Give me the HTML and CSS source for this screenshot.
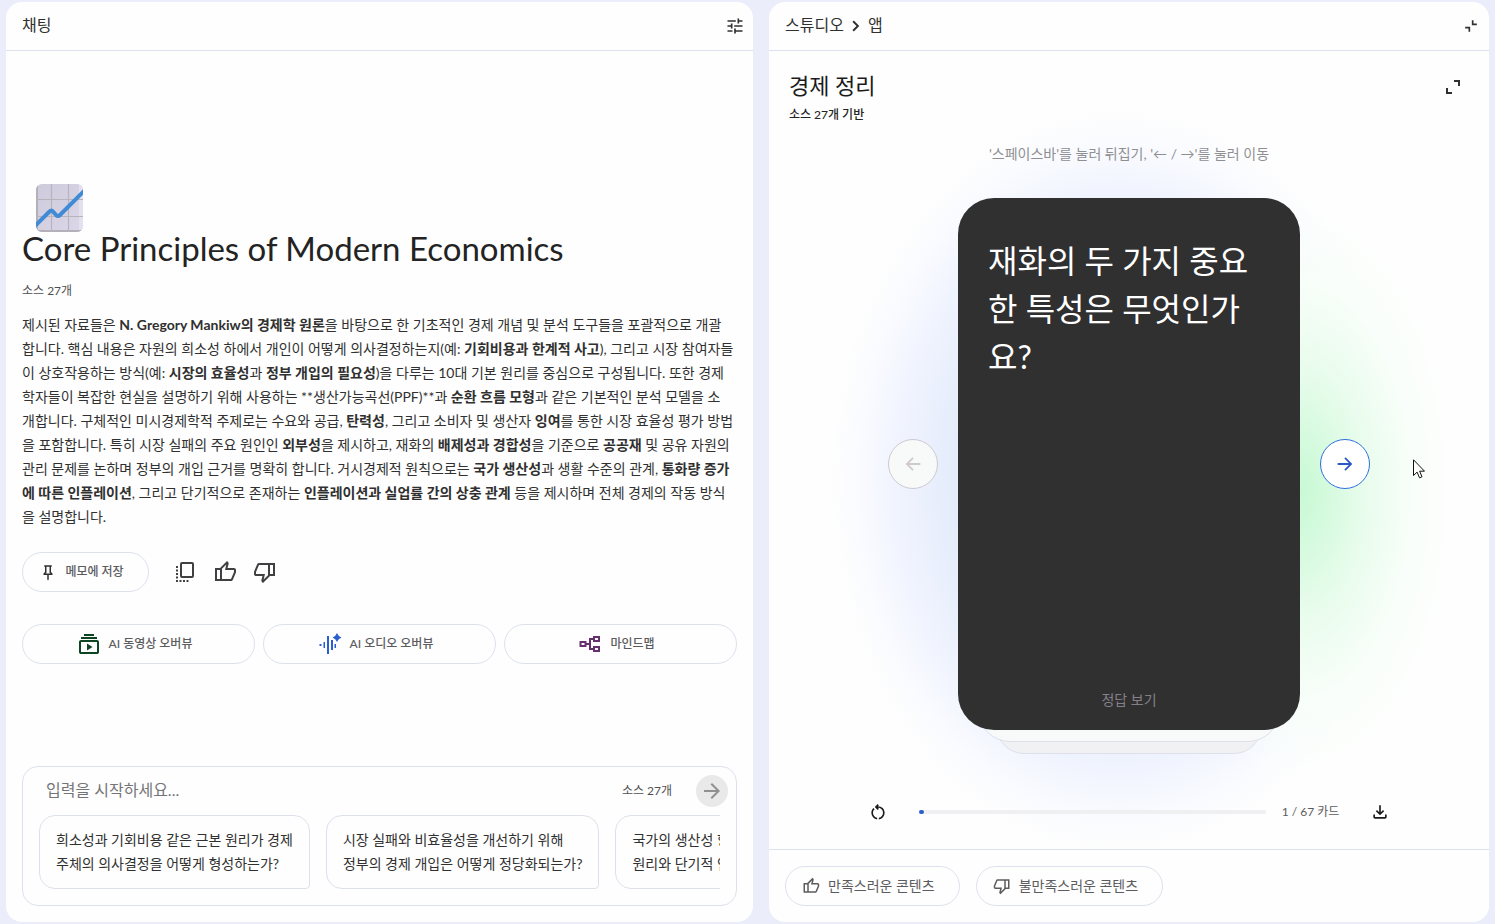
FILE: index.html
```
<!DOCTYPE html>
<html lang="ko">
<head>
  <meta charset="UTF-8">
  <meta name="viewport" content="width=device-width, initial-scale=1">
  <title>Core Principles of Modern Economics</title>
  <link rel="stylesheet" href="styles.css">
</head>
<body>

<div class="workspace">

  <!-- Chat -->
  <section class="panel chat">
    <header class="panel-header">
      <h2>채팅</h2>
      <button class="icon-btn" type="button" aria-label="채팅 설정">
        <svg class="icon s20" viewBox="0 -960 960 960"><path d="M440-120v-240h80v80h320v80H520v80h-80Zm-320-80v-80h240v80H120Zm160-160v-80H120v-80h160v-80h80v240h-80Zm160-80v-80h400v80H440Zm160-160v-240h80v80h160v80H680v80h-80Zm-480-80v-80h400v80H120Z"/></svg>
      </button>
    </header>

    <div class="chat-body">
      <svg class="emoji" viewBox="0 0 48 48" aria-hidden="true">
        <defs>
          <linearGradient id="tile" x1="0" y1="0" x2="1" y2="1">
            <stop offset="0" stop-color="#cccbdc"/>
            <stop offset="1" stop-color="#dcd6e8"/>
          </linearGradient>
          <clipPath id="tileClip"><rect width="47" height="48" rx="6"/></clipPath>
        </defs>
        <g clip-path="url(#tileClip)">
          <rect width="47" height="48" fill="url(#tile)"/>
          <path d="M45 0v48" stroke="#e4e0ef" stroke-width="4"/>
          <path d="M0 47h47M1 0v48" stroke="#b5afba" stroke-width="2"/>
          <path d="M15.500 0v48M32.500 0v48M0 15.500h47M0 32.500h47" stroke="#b9b4bb" stroke-width="1.200"/>
          <path d="M-2 43L13.500 27.500Q15.500 25.500 17 27.500L20 31Q22 33 24 31L50 5" fill="none" stroke="#3f8bd6" stroke-width="4"/>
        </g>
      </svg>
      <h1>Core Principles of Modern Economics</h1>
      <p class="source-count">소스 27개</p>

      <p class="summary">
        제시된 자료들은 <b>N. Gregory Mankiw의 경제학 원론</b>을 바탕으로 한 기초적인 경제 개념 및 분석 도구들을 포괄적으로 개괄<br>합니다. 핵심 내용은 자원의 희소성 하에서 개인이 어떻게 의사결정하는지(예: <b>기회비용과 한계적 사고</b>), 그리고 시장 참여자들<br>이 상호작용하는 방식(예: <b>시장의 효율성</b>과 <b>정부 개입의 필요성</b>)을 다루는 10대 기본 원리를 중심으로 구성됩니다. 또한 경제<br>학자들이 복잡한 현실을 설명하기 위해 사용하는 **생산가능곡선(PPF)**과 <b>순환 흐름 모형</b>과 같은 기본적인 분석 모델을 소<br>개합니다. 구체적인 미시경제학적 주제로는 수요와 공급, <b>탄력성</b>, 그리고 소비자 및 생산자 <b>잉여</b>를 통한 시장 효율성 평가 방법<br>을 포함합니다. 특히 시장 실패의 주요 원인인 <b>외부성</b>을 제시하고, 재화의 <b>배제성과 경합성</b>을 기준으로 <b>공공재</b> 및 공유 자원의<br>관리 문제를 논하며 정부의 개입 근거를 명확히 합니다. 거시경제적 원칙으로는 <b>국가 생산성</b>과 생활 수준의 관계, <b>통화량 증가<br>에 따른 인플레이션</b>, 그리고 단기적으로 존재하는 <b>인플레이션과 실업률 간의 상충 관계</b> 등을 제시하며 전체 경제의 작동 방식<br>을 설명합니다.
      </p>

      <div class="actions">
        <button class="pill save" type="button">
          <svg class="icon s18" viewBox="0 -960 960 960"><path d="m640-480 80 80v80H520v240l-40 40-40-40v-240H240v-80l80-80v-280h-40v-80h400v80h-40v280Zm-286 80h252l-46-46v-314H400v314l-46 46Z"/></svg>
          메모에 저장
        </button>
        <div class="reactions">
          <button class="icon-btn" type="button" aria-label="복사">
            <svg class="icon s24" viewBox="0 0 24 24"><path d="M9 2h10a2 2 0 0 1 2 2v12a2 2 0 0 1-2 2H9a2 2 0 0 1-2-2V4a2 2 0 0 1 2-2Zm0 2v12h10V4ZM3 6h2v2H3ZM3 9.500h2v2H3ZM3 13h2v2H3ZM3 16.500h2v2H3ZM3 20h2v2H3ZM6.500 20h2v2h-2ZM10 20h2v2h-2ZM13.500 20h2v2h-2Z" fill-rule="evenodd"/></svg>
          </button>
          <button class="icon-btn" type="button" aria-label="좋아요">
            <svg class="icon s24" viewBox="0 -960 960 960"><path d="M720-120H80v-520h200l280-280 50 50q7 7 11.500 19t4.500 23v14l-44 174h258q32 0 56 24t24 56v80q0 7-2 15t-4 15L794-168q-9 20-30 34t-44 14Zm-360-80h360l120-280v-80H480l54-220-174 174v406Zm-80 0v-360H160v360Z" fill-rule="evenodd"/></svg>
          </button>
          <button class="icon-btn" type="button" aria-label="싫어요">
            <svg class="icon s24" viewBox="0 -960 960 960"><path d="M240-840h640v520H680L400-40l-50-50q-7-7-11.500-19t-4.500-23v-14l44-174H120q-32 0-56-24t-24-56v-80q0-7 2-15t4-15l120-282q9-20 30-34t44-14Zm360 80H240L120-480v80h360l-54 220 174-174v-406Zm80 0v360h120v-360Z" fill-rule="evenodd"/></svg>
          </button>
        </div>
      </div>

      <div class="overviews">
        <button class="pill" type="button">
          <svg class="icon s24 green" viewBox="0 -960 960 960"><path d="M160-80q-33 0-56.500-23.500T80-160v-400q0-33 23.500-56.500T160-640h640q33 0 56.500 23.500T880-560v400q0 33-23.500 56.500T800-80H160Zm0-80h640v-400H160v400Zm240-60 220-140-220-140v280ZM160-680v-80h640v80H160Zm120-120v-80h400v80H280Z" fill-rule="evenodd"/></svg>
          AI 동영상 오버뷰
        </button>
        <button class="pill" type="button">
          <svg class="icon s24 blue" viewBox="0 0 24 24"><path d="M1.500 12h2v2h-2ZM5.500 10h1.500v6H5.500ZM9 4h2v18H9ZM13 8h2v10h-2ZM16.500 12H18v4h-1.500ZM19 1Q20.200 4.300 23.500 5.500Q20.200 6.700 19 10Q17.800 6.700 14.500 5.500Q17.800 4.300 19 1Z"/></svg>
          AI 오디오 오버뷰
        </button>
        <button class="pill" type="button">
          <svg class="icon s24 purple" viewBox="0 0 24 24"><path d="M2.500 10h5v4h-5ZM16 5h5v4h-5ZM16 15h5v4h-5ZM7.500 12H12M16 7h-4v10h4" fill="none" stroke="currentColor" stroke-width="2"/></svg>
          마인드맵
        </button>
      </div>
    </div>

    <form class="composer">
      <div class="composer-row">
        <input type="text" aria-label="입력" placeholder="입력을 시작하세요...">
        <span class="source-count">소스 27개</span>
        <button class="send" type="button" aria-label="보내기">
          <svg class="icon s24" viewBox="0 -960 960 960"><path d="M647-440H160v-80h487L423-744l57-56 320 320-320 320-57-56 224-224Z"/></svg>
        </button>
      </div>
      <div class="suggestions">
        <button type="button">희소성과 기회비용 같은 근본 원리가 경제<br>주체의 의사결정을 어떻게 형성하는가?</button>
        <button type="button">시장 실패와 비효율성을 개선하기 위해<br>정부의 경제 개입은 어떻게 정당화되는가?</button>
        <button type="button">국가의 생산성 향상과 관련된 경제<br>원리와 단기적 인플레이션의 관계는?</button>
      </div>
    </form>
  </section>

  <!-- Studio -->
  <section class="panel studio">
    <header class="panel-header">
      <nav class="crumbs">
        <a href="#">스튜디오</a>
        <svg class="icon s20" viewBox="0 -960 960 960"><path d="M504-480 310-674l66-66 260 260-260 260-66-66 194-194Z"/></svg>
        <span>앱</span>
      </nav>
      <button class="icon-btn collapse" type="button" aria-label="접기">
        <svg class="icon s20" viewBox="0 -960 960 960"><path d="M440-440v240h-80v-160H200v-80h240Zm160-320v160h160v80H520v-240h80Z"/></svg>
      </button>
    </header>

    <div class="deck">
      <div class="deck-head">
        <div>
          <h1>경제 정리</h1>
          <p>소스 27개 기반</p>
        </div>
        <button class="icon-btn" type="button" aria-label="펼치기">
          <svg class="icon s24" viewBox="0 -960 960 960"><path d="M200-200v-240h80v160h160v80H200Zm480-320v-160H520v-80h240v240h-80Z"/></svg>
        </button>
      </div>
      <p class="hint">'스페이스바'를 눌러 뒤집기, '← / →'를 눌러 이동</p>

      <div class="stage">
        <button class="nav-btn prev" type="button" aria-label="이전" disabled>
          <svg class="icon s24" viewBox="0 -960 960 960"><path d="m313-440 196 196-57 56-292-292 292-292 57 56-196 196h487v80H313Z"/></svg>
        </button>
        <div class="card-stack">
          <div class="card">
            <p>재화의 두 가지 중요한 특성은 무엇인가요?</p>
            <button type="button">정답 보기</button>
          </div>
        </div>
        <button class="nav-btn next" type="button" aria-label="다음">
          <svg class="icon s24" viewBox="0 -960 960 960"><path d="M647-440H160v-80h487L451-716l57-56 292 292-292 292-57-56 196-196Z"/></svg>
        </button>
      </div>

      <div class="progress-row">
        <button class="icon-btn" type="button" aria-label="다시 시작">
          <svg class="icon s20" viewBox="0 -960 960 960"><path d="M440-122q-121-15-200.500-105.500T160-440q0-66 26-126.500T260-672l57 57q-38 34-57.500 79T240-440q0 88 56 155.500T440-202v80Zm80 0v-80q87-16 143.500-83T720-440q0-100-70-170t-170-70h-3l44 44-56 56-140-140 140-140 56 56-44 44h3q134 0 227 93t93 227q0 121-79.500 211.500T520-122Z"/></svg>
        </button>
        <div class="track"><div class="fill"></div></div>
        <span class="count">1 / 67 카드</span>
        <button class="icon-btn" type="button" aria-label="다운로드">
          <svg class="icon s20" viewBox="0 -960 960 960"><path d="M480-320 280-520l56-58 104 104v-326h80v326l104-104 56 58-200 200ZM240-160q-33 0-56.500-23.500T160-240v-120h80v120h480v-120h80v120q0 33-23.500 56.500T720-160H240Z"/></svg>
        </button>
      </div>
    </div>

    <footer class="feedback">
      <button class="pill" type="button">
        <svg class="icon s18" viewBox="0 -960 960 960"><path d="M720-120H80v-520h200l280-280 50 50q7 7 11.500 19t4.500 23v14l-44 174h258q32 0 56 24t24 56v80q0 7-2 15t-4 15L794-168q-9 20-30 34t-44 14Zm-360-80h360l120-280v-80H480l54-220-174 174v406Zm-80 0v-360H160v360Z" fill-rule="evenodd"/></svg>
        만족스러운 콘텐츠
      </button>
      <button class="pill" type="button">
        <svg class="icon s18" viewBox="0 -960 960 960"><path d="M240-840h640v520H680L400-40l-50-50q-7-7-11.500-19t-4.500-23v-14l44-174H120q-32 0-56-24t-24-56v-80q0-7 2-15t4-15l120-282q9-20 30-34t44-14Zm360 80H240L120-480v80h360l-54 220 174-174v-406Zm80 0v360h120v-360Z" fill-rule="evenodd"/></svg>
        불만족스러운 콘텐츠
      </button>
    </footer>

    <svg class="cursor" viewBox="0 0 12 20" aria-hidden="true"><path d="M.5 .8v15.700l3.600-3.400 2.400 5.700 2.500-1-2.400-5.600h4.900Z" fill="#fff" stroke="#111"/></svg>
  </section>

</div>

</body>
</html>
```
FILE: styles.css
```
* {
  box-sizing: border-box;
}

body {
  margin: 0;
  background: #ebedfa;
  color: #303030;
  font-family: Lato, "Noto Sans CJK KR", sans-serif;
  font-size: 14px;
  line-height: 24px;
}

h1, h2, p {
  margin: 0;
  font-weight: 400;
}

button, input {
  font: inherit;
  color: inherit;
  background: none;
  border: none;
  padding: 0;
}

button {
  cursor: pointer;
}

a {
  color: inherit;
  text-decoration: none;
}

.workspace {
  display: grid;
  grid-template-columns: minmax(0, 747fr) minmax(0, 720fr);
  gap: 16px;
  min-height: 100vh;
  padding: 2px 6px;
}

.panel {
  position: relative;
  display: flex;
  flex-direction: column;
  background: #fefefe;
  border-radius: 16px;
  overflow: hidden;
}

.panel-header {
  display: flex;
  align-items: center;
  justify-content: space-between;
  height: 49px;
  padding: 0 8px 0 16px;
  border-bottom: 1px solid #dde1eb;
  font-size: 16px;
}

.panel-header h2,
.crumbs a,
.crumbs span {
  padding-bottom: 2px;
  font-size: 16px;
}

.icon {
  display: block;
  fill: currentColor;
  flex: none;
}

.s18 { width: 18px; height: 18px; }
.s20 { width: 20px; height: 20px; }
.s24 { width: 24px; height: 24px; }

.green { color: #0d4422; }
.blue { color: #2b5fce; }
.purple { color: #66306f; }

.pill {
  display: flex;
  align-items: center;
  justify-content: center;
  gap: 8px;
  height: 40px;
  padding-right: 8px;
  border: 1px solid #dde1eb;
  border-radius: 20px;
  background: #fefefe;
  color: #5c5c5f;
  font-size: 12px;
  font-weight: 500;
}

/* Chat */
.chat-body {
  flex: 1;
  display: flex;
  flex-direction: column;
  justify-content: center;
  padding: 31px 16px 0;
}

.emoji {
  width: 48px;
  height: 48px;
  margin-left: 14px;
}

.chat-body h1 {
  font-size: 33px;
  line-height: 32px;
  color: #232323;
}

.source-count {
  font-size: 12px;
  color: #505053;
}

.chat-body .source-count {
  margin: 15px 0 10px;
}

.summary b {
  font-weight: 700;
}

.actions {
  display: flex;
  align-items: center;
  gap: 24px;
  margin: 23px 0 32px;
}

.save {
  width: 127px;
}

.save .icon {
  color: #303030;
}

.reactions {
  display: flex;
  gap: 16px;
  color: #404043;
}

.overviews {
  display: grid;
  grid-template-columns: repeat(3, 1fr);
  gap: 8px;
}

.composer {
  margin: 0 16px 16px;
  border: 1px solid #dde1eb;
  border-radius: 16px;
}

.composer-row {
  display: flex;
  align-items: center;
  gap: 24px;
  padding: 8px 8px 8px 23px;
}

.composer-row input {
  flex: 1;
  min-width: 0;
  padding-bottom: 2px;
  font-size: 16px;
  outline: none;
}

.composer-row input::placeholder {
  color: #757578;
}

.send {
  display: grid;
  place-items: center;
  width: 32px;
  height: 32px;
  border-radius: 50%;
  background: #e9e9e9;
  color: #909090;
}

.suggestions {
  display: flex;
  gap: 16px;
  margin: 0 16px 16px;
  overflow: hidden;
}

.suggestions button {
  flex: none;
  padding: 12px 16px;
  border: 1px solid #dde1eb;
  border-radius: 16px 16px 4px 16px;
  text-align: left;
  white-space: nowrap;
}

/* Studio */
.crumbs {
  display: flex;
  align-items: center;
  gap: 2px;
}

.deck {
  flex: 1;
  display: flex;
  flex-direction: column;
  padding: 18px 20px 0;
  background:
    radial-gradient(ellipse 156px 290px at 530px 440px, #c8f9d4 0%, #d2fadc 15%, #e8fcec 42%, #f8fef9 72%, transparent 100%),
    radial-gradient(ellipse 290px 375px at 350px 430px, #dde6fa 0%, #e3ebfa 55%, #eff3fe 75%, #fafbff 90%, transparent 100%);
}

.deck-head {
  display: flex;
  align-items: flex-start;
  justify-content: space-between;
}

.deck-head h1 {
  font-size: 22px;
  line-height: 34px;
  color: #1b1b1c;
}

.deck-head p {
  font-size: 12px;
  font-weight: 500;
  color: #232323;
}

.deck-head .icon-btn {
  padding: 6px 4px;
}

.hint {
  margin: 15px 0 32px;
  color: #8f8f92;
  text-align: center;
}

.stage {
  display: flex;
  align-items: center;
  justify-content: center;
  gap: 20px;
}

.nav-btn {
  display: grid;
  place-items: center;
  width: 50px;
  height: 50px;
  border: 1px solid #2b6fe0;
  border-radius: 50%;
  background: #fff;
  color: #2b59c3;
}

.nav-btn .icon {
  width: 22px;
  height: 22px;
}

.prev {
  border-color: #ccc9d2;
  background: #f8faf9;
  color: #d0c9cb;
}

.card-stack {
  position: relative;
  z-index: 0;
  width: 342px;
}

/* two cards peeking out below the current one */
.card-stack::before,
.card-stack::after {
  content: "";
  position: absolute;
  z-index: -1;
  height: 100px;
  border: 1px solid #dde1eb;
}

.card-stack::before {
  left: 38px;
  right: 38px;
  bottom: -24px;
  z-index: -2;
  border-radius: 28px;
  background: #f1f1f4;
}

.card-stack::after {
  left: 20px;
  right: 20px;
  bottom: -12px;
  border-radius: 32px;
  background: #f8faf9;
}

.card {
  display: flex;
  flex-direction: column;
  justify-content: space-between;
  min-height: 532px;
  padding: 39px 30px 18px;
  border-radius: 36px;
  background: #303030;
  color: #fff;
}

.card p {
  font-size: 32px;
  line-height: 48px;
}

.card button {
  color: #858088;
}

.progress-row {
  display: flex;
  align-items: center;
  justify-content: center;
  margin-top: 70px;
  color: #1b1b1c;
}

.track {
  flex: 0 1 347px;
  height: 4px;
  margin: 0 16px 0 31px;
  border-radius: 2px;
  background: #f0f0f3;
}

.fill {
  width: 5px;
  height: 4px;
  border-radius: 2px;
  background: #2b5fce;
}

.count {
  margin-right: 31px;
  font-size: 12px;
  color: #5c5c5f;
}

.feedback {
  display: flex;
  gap: 16px;
  padding: 16px;
  border-top: 1px solid #dde1eb;
}

.feedback .pill {
  padding: 0 24px 0 16px;
  font-size: 14px;
  font-weight: 400;
}

.cursor {
  position: absolute;
  top: 457px;
  right: 64px;
  width: 12px;
  height: 20px;
}
```
